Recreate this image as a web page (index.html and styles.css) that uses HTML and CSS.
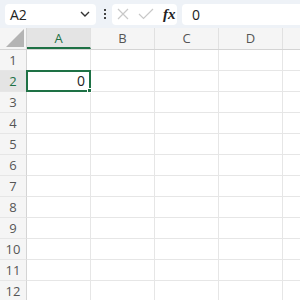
FILE: index.html
```html
<html>
    <head>
        <title>Sheet</title>
        <link rel="stylesheet" href="styles.css">
    </head>
    <body>
        <div class="formula-bar">
            <div class="name-box">
                <span class="name-text">A2</span>
                <svg class="chevron" width="10" height="6" viewBox="0 0 10 6"><path d="M1 1l4 4 4-4" fill="none" stroke="#333" stroke-width="1.4"/></svg>
            </div>
            <div class="dots"><span></span><span></span><span></span></div>
            <div class="func-box">
                <svg width="14" height="14" viewBox="0 0 14 14"><path d="M2 2l10 10M12 2L2 12" stroke="#c8c8c8" stroke-width="1.2"/></svg>
                <svg width="16" height="14" viewBox="0 0 16 14"><path d="M1 7l4.5 4.5L15 2" fill="none" stroke="#c8c8c8" stroke-width="1.2"/></svg>
                <span class="fx">fx</span>
            </div>
            <div class="value-box">0</div>
        </div>

        <div class="sheet">
            <div class="row head">
                <div class="corner"><svg width="18" height="18" viewBox="0 0 18 18"><path d="M18 0V18H0Z" fill="#b4b4b4"/></svg></div>
                <div class="col-head selected">A</div>
                <div class="col-head">B</div>
                <div class="col-head">C</div>
                <div class="col-head">D</div>
                <div class="col-head"></div>
            </div>
            <div class="row"><div class="row-head">1</div><div class="cell"></div><div class="cell"></div><div class="cell"></div><div class="cell"></div><div class="cell"></div></div>
            <div class="row"><div class="row-head selected">2</div><div class="cell active">0<span class="handle"></span></div><div class="cell"></div><div class="cell"></div><div class="cell"></div><div class="cell"></div></div>
            <div class="row"><div class="row-head">3</div><div class="cell"></div><div class="cell"></div><div class="cell"></div><div class="cell"></div><div class="cell"></div></div>
            <div class="row"><div class="row-head">4</div><div class="cell"></div><div class="cell"></div><div class="cell"></div><div class="cell"></div><div class="cell"></div></div>
            <div class="row"><div class="row-head">5</div><div class="cell"></div><div class="cell"></div><div class="cell"></div><div class="cell"></div><div class="cell"></div></div>
            <div class="row"><div class="row-head">6</div><div class="cell"></div><div class="cell"></div><div class="cell"></div><div class="cell"></div><div class="cell"></div></div>
            <div class="row"><div class="row-head">7</div><div class="cell"></div><div class="cell"></div><div class="cell"></div><div class="cell"></div><div class="cell"></div></div>
            <div class="row"><div class="row-head">8</div><div class="cell"></div><div class="cell"></div><div class="cell"></div><div class="cell"></div><div class="cell"></div></div>
            <div class="row"><div class="row-head">9</div><div class="cell"></div><div class="cell"></div><div class="cell"></div><div class="cell"></div><div class="cell"></div></div>
            <div class="row"><div class="row-head">10</div><div class="cell"></div><div class="cell"></div><div class="cell"></div><div class="cell"></div><div class="cell"></div></div>
            <div class="row"><div class="row-head">11</div><div class="cell"></div><div class="cell"></div><div class="cell"></div><div class="cell"></div><div class="cell"></div></div>
            <div class="row"><div class="row-head">12</div><div class="cell"></div><div class="cell"></div><div class="cell"></div><div class="cell"></div><div class="cell"></div></div>
        </div>
    </body>
</html>
```

FILE: styles.css
```css
* {
    margin: 0;
    padding: 0;
    box-sizing: border-box;
}

body {
    width: 300px;
    height: 300px;
    overflow: hidden;
    background: #fff;
    font-family: "Open Sans", "Noto Sans", sans-serif;
    color: #333;
}

.formula-bar {
    display: flex;
    align-items: center;
    height: 28px;
    padding: 0 0 0 5px;
    background: #eef2f7;
}

.name-box {
    display: flex;
    align-items: center;
    justify-content: space-between;
    width: 91px;
    height: 21px;
    padding: 0 6px 0 5px;
    background: #fff;
    border-radius: 4px;
}

.name-text {
    font-size: 14px;
    color: #222;
}

.dots {
    display: flex;
    flex-direction: column;
    gap: 2px;
    margin: 0 6px 0 8px;
}

.dots span {
    width: 2px;
    height: 2px;
    background: #444;
}

.func-box {
    display: flex;
    align-items: center;
    gap: 8px;
    width: 65px;
    height: 21px;
    padding-left: 4px;
    background: #fff;
    border-radius: 4px;
}

.fx {
    font-family: "Liberation Serif", serif;
    font-style: italic;
    font-weight: bold;
    font-size: 15px;
    color: #222;
    margin-left: 1px;
}

.value-box {
    flex: 1;
    height: 21px;
    margin-left: 5px;
    padding-left: 10px;
    background: #fff;
    border-radius: 4px 0 0 4px;
    font-size: 14px;
    line-height: 21px;
    color: #222;
}

.sheet {
    display: flex;
    flex-direction: column;
    width: 300px;
    overflow: hidden;
}

.row {
    display: flex;
    height: 21px;
}

.row.head {
    height: 22px;
    background: #f5f5f5;
    border-bottom: 1px solid #d4d4d4;
}

.corner {
    width: 27px;
    flex-shrink: 0;
    display: flex;
    align-items: flex-end;
    justify-content: flex-end;
    padding: 0 2px 2px 0;
    border-right: 1px solid #d4d4d4;
}

.col-head {
    width: 64px;
    flex-shrink: 0;
    border-right: 1px solid #e1e1e1;
    text-align: center;
    font-size: 13px;
    line-height: 21px;
    color: #555;
}

.col-head.selected {
    background: #e4e4e4;
    color: #1e7145;
    border-bottom: 2px solid #1e7145;
}

.row-head {
    width: 27px;
    flex-shrink: 0;
    background: #f5f5f5;
    border-right: 1px solid #d4d4d4;
    border-bottom: 1px solid #e6e6e6;
    text-align: center;
    font-size: 13px;
    line-height: 20px;
    color: #555;
}

.row-head.selected {
    background: #e4e4e4;
    color: #1e7145;
}

.cell {
    width: 64px;
    flex-shrink: 0;
    border-right: 1px solid #e6e6e6;
    border-bottom: 1px solid #e6e6e6;
    font-size: 14px;
    line-height: 20px;
    text-align: right;
    padding-right: 4px;
    color: #222;
}

.cell.active {
    position: relative;
    border: 2px solid #1e7145;
    margin-top: -1px;
    height: 22px;
    line-height: 18px;
    margin-left: -1px;
    width: 65px;
}

.handle {
    position: absolute;
    right: -3px;
    bottom: -3px;
    width: 5px;
    height: 5px;
    background: #1e7145;
    border: 1px solid #fff;
}
```
